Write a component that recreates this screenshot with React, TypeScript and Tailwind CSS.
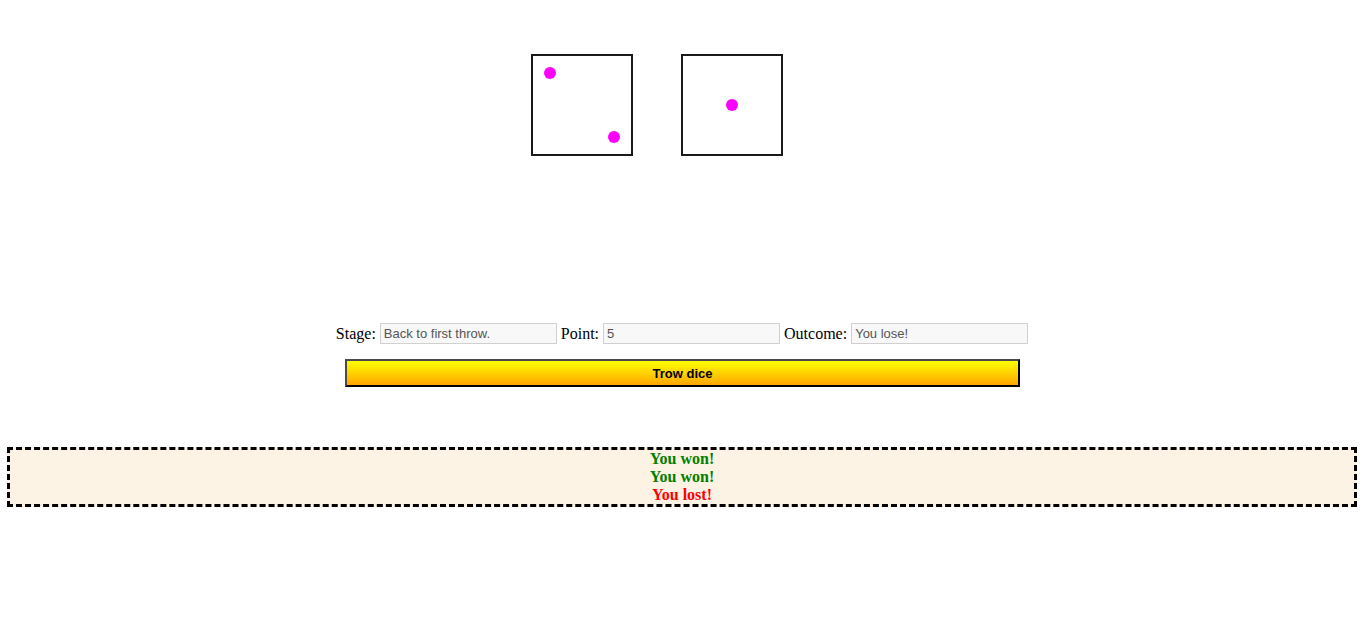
import React from "react";

const serif = "font-['Times_New_Roman','Liberation_Serif',serif]";
const sans = "font-['Arial','Liberation_Sans',sans-serif]";

function Die({ dots }: { dots: [number, number][] }) {
  return (
    <div className="relative w-[102px] h-[102px] border-2 border-[#1a1a1a] bg-white">
      {dots.map(([x, y], i) => (
        <span
          key={i}
          className="absolute w-[12px] h-[12px] rounded-full bg-[#ff00ff]"
          style={{ left: x - 8, top: y - 8 }}
        />
      ))}
    </div>
  );
}

function Field({ label, value }: { label: string; value: string }) {
  return (
    <>
      <span className="text-[16px] text-black">{label}</span>
      <input
        readOnly
        value={value}
        className={`${sans} w-[177px] h-[21px] px-[3px] text-[13px] text-[#555] bg-[#f8f8f8] border border-[#d0d0d0] outline-none ml-[4px] mr-[4px]`}
      />
    </>
  );
}

export default function App() {
  return (
    <div className={`${serif} min-h-screen bg-white`}>
      {/* dice */}
      <div className="flex gap-[48px] pl-[531px] pt-[54px]">
        <Die dots={[[19, 19], [83, 83]]} />
        <Die dots={[[51, 51]]} />
      </div>

      {/* state row */}
      <div className="flex justify-center items-center mt-[167px] h-[21px] leading-none pl-[3px]">
        <Field label="Stage:" value="Back to first throw." />
        <Field label="Point:" value="5" />
        <Field label="Outcome:" value="You lose!" />
      </div>

      <div className="flex justify-center mt-[15px]">
        <button
          className={`${sans} w-[675px] h-[28px] pt-[1px] border-2 border-t-[#4a4a4a] border-l-[#4a4a4a] border-r-black border-b-black bg-gradient-to-b from-[#ffff00] to-[#ffa500] text-[13px] font-bold text-black`}
        >
          Trow dice
        </button>
      </div>

      {/* results log */}
      <div className="mx-[7px] mr-[8px] mt-[60px] border-[3px] border-dashed border-black bg-[#fdf3e5] text-center text-[16px] font-bold leading-[18px]">
        <div className="text-[#008000]">You won!</div>
        <div className="text-[#008000]">You won!</div>
        <div className="text-[#ff0000]">You lost!</div>
      </div>
    </div>
  );
}
